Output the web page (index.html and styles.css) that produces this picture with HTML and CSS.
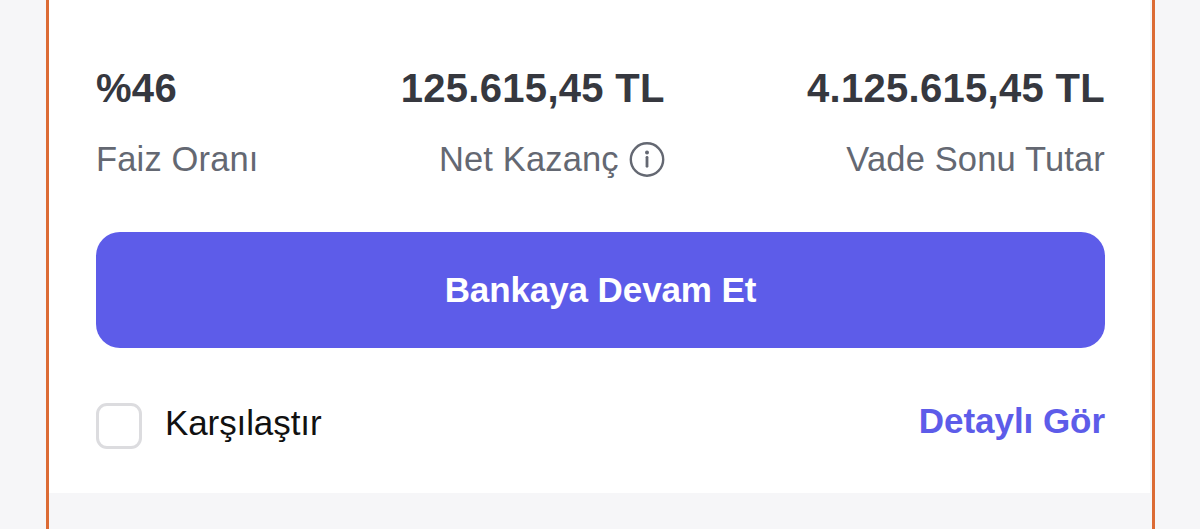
FILE: index.html
```html
<!DOCTYPE html>
<html lang="tr">
  <head>
    <meta charset="UTF-8" />
    <meta name="viewport" content="width=device-width, initial-scale=1.0" />
    <title>Mevduat Teklifi</title>
    <link rel="stylesheet" href="styles.css">
  </head>
  <body>
    <div class="offer-frame">
      <div class="offer-card">
        <div class="offer-values">
          <div class="value-item rate">
            <strong>%46</strong>
            <span class="label">Faiz Oranı</span>
          </div>
          <div class="value-item earning">
            <strong>125.615,45 TL</strong>
            <span class="label">
              <span>Net Kazanç</span>
              <svg class="info-icon" viewBox="0 0 36 36" fill="none">
                <circle cx="18" cy="18.5" r="16.2" stroke="#646872" stroke-width="2.4" />
                <path d="M18 16.3V25.3" stroke="#646872" stroke-width="2.8" stroke-linecap="round" />
                <circle cx="18" cy="11.6" r="2" fill="#646872" />
              </svg>
            </span>
          </div>
          <div class="value-item total">
            <strong>4.125.615,45 TL</strong>
            <span class="label">Vade Sonu Tutar</span>
          </div>
        </div>

        <button type="button" class="bank-button">Bankaya Devam Et</button>

        <div class="offer-footer">
          <label class="compare">
            <input type="checkbox" />
            <span>Karşılaştır</span>
          </label>
          <a href="#" class="detail-link">Detaylı Gör</a>
        </div>
      </div>
    </div>
  </body>
</html>
```
FILE: styles.css
```css
* {
  box-sizing: border-box;
}

body {
  margin: 0;
  background-color: #f6f6f8;
  font-family: "Liberation Sans", Arial, sans-serif;
}

.offer-frame {
  height: 529px;
  margin: 0 45px 0 46px;
  border-left: 3px solid #dc6b35;
  border-right: 3px solid #dc6b35;
}

.offer-card {
  height: 493px;
  margin-right: 2px;
  padding: 64px 45px 0 47px;
  background-color: white;
}

.offer-values {
  display: flex;
  justify-content: space-between;
}

.value-item {
  display: flex;
  flex-direction: column;
  align-items: flex-end;
}

.value-item.rate {
  align-items: flex-start;
}

.value-item strong {
  font-size: 40px;
  line-height: 48px;
  letter-spacing: 0.3px;
  color: #36383f;
}

.label {
  display: flex;
  align-items: center;
  gap: 10px;
  margin-top: 23px;
  font-size: 34.5px;
  line-height: 48px;
  letter-spacing: 0.15px;
  color: #646872;
}

.info-icon {
  width: 36px;
  height: 36px;
}

.bank-button {
  display: block;
  width: 100%;
  height: 116px;
  margin-top: 49px;
  border: none;
  border-radius: 24px;
  background-color: #5d5ce9;
  color: white;
  font-family: inherit;
  font-size: 35px;
  font-weight: bold;
  letter-spacing: -0.1px;
  cursor: pointer;
}

.offer-footer {
  display: flex;
  justify-content: space-between;
  margin-top: 52px;
}

.compare {
  display: flex;
  gap: 23px;
  font-size: 35px;
  line-height: 46px;
  letter-spacing: -0.1px;
  color: #111111;
}

.compare input {
  appearance: none;
  width: 46px;
  height: 46px;
  margin: 3px 0 0;
  border: 3px solid #dcdcdf;
  border-radius: 11px;
}

.detail-link {
  color: #5d5ce9;
  font-size: 35px;
  font-weight: bold;
  line-height: 42px;
  letter-spacing: -0.05px;
  text-decoration: none;
}
```
